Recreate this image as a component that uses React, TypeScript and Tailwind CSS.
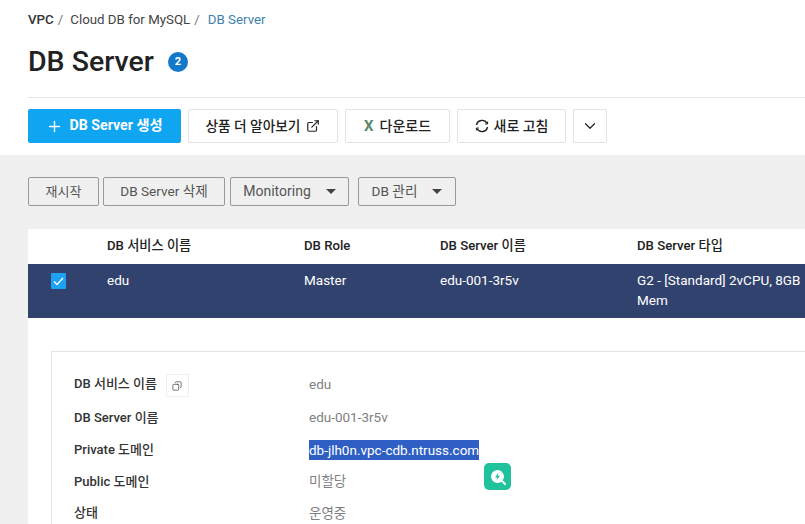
import { ChevronDown, Copy, ExternalLink, Plus } from "lucide-react";

const font = "font-['Roboto','Noto_Sans_CJK_KR',sans-serif]";

const Caret = () => <span className="ml-[15px] inline-block border-x-[5px] border-t-[5.5px] border-x-transparent border-t-[#444]" />;

const details = [
  { label: "DB 서비스 이름", value: "edu", h: "h-[34px]", copy: true },
  { label: "DB Server 이름", value: "edu-001-3r5v", h: "h-[33px]" },
  { label: "Private 도메인", value: "db-jlh0n.vpc-cdb.ntruss.com", h: "h-[32px]", selected: true },
  { label: "Public 도메인", value: "미할당", h: "h-[31px]" },
  { label: "상태", value: "운영중", h: "h-[32px]" },
];

const App = () => {
  return (
    <div className={`${font} w-[805px] h-[524px] overflow-hidden bg-[#f0f0f0] relative`}>
      <header className="bg-white h-[155px] pl-[28px]">
        <div className="h-[38px] flex items-center text-[13.3px] pt-[1px]">
          <span className="font-medium text-[#333]">VPC</span>
          <span className="text-[#777] ml-[4px]">/</span>
          <span className="text-[#444] ml-[7px]">Cloud DB for MySQL</span>
          <span className="text-[#777] ml-[4px]">/</span>
          <span className="text-[#3d7fae] ml-[8px]">DB Server</span>
        </div>
        <div className="h-[46px] flex items-center pt-[2px]">
          <h1 className="text-[28.5px] font-medium text-[#222] leading-none">DB Server</h1>
          <span className="ml-[14px] w-[20px] h-[20px] rounded-full bg-[#1478c8] text-white text-[11px] font-bold flex items-center justify-center">2</span>
        </div>
        <div className="mt-[13px] border-t border-[#e5e5e5] pt-[11px] flex">
          <button className="w-[153px] h-[34px] rounded-[2px] bg-[#10a5f0] text-white text-[14.2px] font-bold flex items-center justify-center">
            <Plus size={17} strokeWidth={2} className="mr-[6px]" />
            DB Server 생성
          </button>
          <button className="ml-[7px] w-[150px] h-[34px] border border-[#e2e2e2] rounded-[2px] text-[13.7px] font-medium text-[#222] flex items-center justify-center">
            상품 더 알아보기
            <ExternalLink size={14} strokeWidth={2} className="ml-[6px]" />
          </button>
          <button className="ml-[7px] w-[105px] h-[34px] border border-[#e2e2e2] rounded-[2px] text-[14px] font-medium text-[#222] flex items-center justify-center">
            <span className="text-[#5d8a6c] text-[15px] font-bold mr-[6px]">X</span>
            다운로드
          </button>
          <button className="ml-[7px] w-[109px] h-[34px] border border-[#e2e2e2] rounded-[2px] text-[14px] font-medium text-[#222] flex items-center justify-center">
            <svg width="14" height="14" viewBox="0 0 14 14" fill="none" stroke="#222" strokeWidth="1.4" className="mr-[5px]">
              <path d="M1.5 6 A5.6 5.6 0 0 1 12 4.5" />
              <path d="M12.5 8 A5.6 5.6 0 0 1 2 9.5" />
              <path d="M12.6 2.5 V5 H10.2" strokeWidth="1" />
              <path d="M1.4 11.5 V9 H3.8" strokeWidth="1" />
            </svg>
            새로 고침
          </button>
          <button className="ml-[7px] w-[34px] h-[34px] border border-[#e2e2e2] rounded-[2px] text-[#222] flex items-center justify-center">
            <ChevronDown size={18} strokeWidth={1.6} />
          </button>
        </div>
      </header>

      <main className="pl-[28px] pt-[22px]">
        <div className="flex h-[29px] text-[13.6px] text-[#555]">
          <button className="w-[71px] border border-[#999] rounded-[2px] flex items-center justify-center text-[13px]">재시작</button>
          <button className="ml-[4px] w-[122px] border border-[#999] rounded-[2px] flex items-center justify-center">DB Server 삭제</button>
          <button className="ml-[5px] w-[119px] border border-[#999] rounded-[2px] flex items-center justify-center text-[14px]">
            Monitoring
            <Caret />
          </button>
          <button className="ml-[9px] w-[98px] border border-[#999] rounded-[2px] flex items-center justify-center">
            DB 관리
            <Caret />
          </button>
        </div>

        <section className="mt-[23px] bg-white h-[300px]">
          <div className="grid grid-cols-[79px_197px_136px_197px_1fr] h-[34px] items-center text-[13.2px] font-medium text-[#222]">
            <span />
            <span>DB 서비스 이름</span>
            <span>DB Role</span>
            <span>DB Server 이름</span>
            <span>DB Server 타입</span>
          </div>
          <div className="mt-[1px] grid grid-cols-[79px_197px_136px_197px_1fr] h-[54px] bg-[#32426f] text-[13.5px] text-white leading-[20px] pt-[6px]">
            <span className="pl-[23px] pt-[3px]">
              <span className="w-[15px] h-[16px] rounded-[1px] bg-[#1da1f2] flex items-center justify-center">
                <svg width="11" height="9" viewBox="0 0 11 9" fill="none" stroke="white" strokeWidth="1.3">
                  <path d="M1 4.5 L4 7.5 L10 1" />
                </svg>
              </span>
            </span>
            <span>edu</span>
            <span>Master</span>
            <span>edu-001-3r5v</span>
            <span className="w-[168px]">G2 - [Standard] 2vCPU, 8GB Mem</span>
          </div>
          <div className="ml-[23px] mt-[33px] border border-[#e4e4e4] w-[800px] h-[200px] pt-[15px] pl-[22px] text-[13.5px]">
            {details.map((row) => (
              <div key={row.label} className={`flex items-center ${row.h}`}>
                <div className="w-[235px] flex items-center font-medium text-[13px] text-[#333]">
                  {row.label}
                  {row.copy && (
                    <span className="ml-[9px] mt-[3px] w-[23px] h-[23px] border border-[#f0f0f0] flex items-center justify-center">
                      <Copy size={10} strokeWidth={1.6} className="-scale-x-100" />
                    </span>
                  )}
                </div>
                {row.selected ? (
                  <span className="bg-[#2f5fc4] text-white leading-[20px]">{row.value}</span>
                ) : (
                  <span className="text-[#808080]">{row.value}</span>
                )}
              </div>
            ))}
          </div>
        </section>
      </main>

      <div className="absolute left-[484px] top-[463px] w-[27px] h-[27px] rounded-[5px] bg-[#1fc29a] flex items-center justify-center">
        <svg width="18" height="18" viewBox="0 0 18 18">
          <circle cx="8.5" cy="8.5" r="6.5" fill="white" />
          <path d="M12.5 12.5 L16 16" stroke="white" strokeWidth="2" strokeLinecap="round" />
          <path d="M9.5 4.5 L6 9.5 H8.3 L7.5 12.5 L11 7.8 H8.8 Z" fill="#1fc29a" />
        </svg>
      </div>
    </div>
  );
};

export default App;
